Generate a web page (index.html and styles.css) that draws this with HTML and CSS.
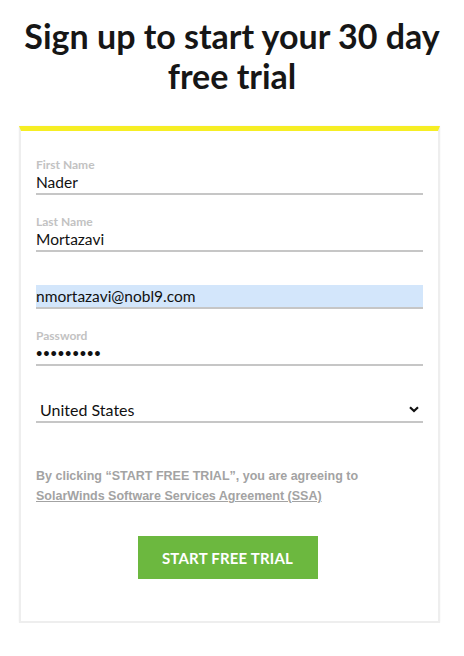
FILE: index.html
```html
<!DOCTYPE html>
<html>
<head>
<meta charset="utf-8">
<link rel="stylesheet" href="styles.css">
</head>
<body>
<h1 class="title">Sign up to start your 30 day free trial</h1>
<form class="card">
  <div class="field">
    <label class="label">First Name</label>
    <div class="input">Nader</div>
  </div>
  <div class="field">
    <label class="label">Last Name</label>
    <div class="input">Mortazavi</div>
  </div>
  <div class="field">
    <label class="label hidden">Email</label>
    <div class="input autofill">nmortazavi@nobl9.com</div>
  </div>
  <div class="field">
    <label class="label">Password</label>
    <div class="input dots">•••••••••</div>
  </div>
  <div class="select">
    <span>United States</span>
    <svg class="chev" width="10" height="7" viewBox="0 0 10 7"><path d="M1 1.2 L5 5 L9 1.2" fill="none" stroke="#111" stroke-width="2.2"/></svg>
  </div>
  <p class="terms">By clicking “START FREE TRIAL”, you are agreeing to<br><a class="link">SolarWinds Software Services Agreement (SSA)</a></p>
  <div class="actions"><button type="button" class="btn">START FREE TRIAL</button></div>
</form>
</body>
</html>
```
FILE: styles.css
```css
html, body { margin: 0; padding: 0; background: #fff; }
body { width: 464px; font-family: "Lato", "Noto Sans", sans-serif; color: #111; }
.title {
  margin: 0;
  padding: 16px 10px 0 10px;
  height: 110px;
  box-sizing: border-box;
  text-align: center;
  font-size: 34px;
  line-height: 40px;
  font-weight: 700;
  color: #161616;
}
.card {
  margin: 16px 24px 0 19px;
  border: 2px solid #eeeeee;
  border-top: 5px solid #f6ee24;
  padding: 28px 15px 42px 15px;
  box-shadow: 0 0 2px rgba(0,0,0,0.05);
}
.field { margin-bottom: 21px; }
.field:nth-child(4) { margin-bottom: 0; }
.label {
  display: block;
  font-size: 12px;
  line-height: 12px;
  font-weight: 700;
  color: #c2c2c2;
}
.label.hidden { visibility: hidden; }
.input {
  height: 22px;
  line-height: 22px;
  font-size: 15.5px;
  border-bottom: 2px solid #c6c6c6;
  color: #111;
}
.autofill { background: #d3e6fb; }
.dots { font-size: 11px; letter-spacing: 0.9px; font-weight: 700; }
.select {
  margin-top: 31px;
  height: 24px;
  border-bottom: 2px solid #c6c6c6;
  display: flex;
  align-items: center;
  justify-content: space-between;
  padding: 0 4px 0 4px;
  font-size: 16px;
}
.chev { display: block; margin-top: 1px; }
.terms {
  margin: 43px 0 0 0;
  font-family: "Liberation Sans", Arial, sans-serif;
  font-weight: 700;
  font-size: 12.5px;
  line-height: 20px;
  color: #a3a3a3;
}
.link { text-decoration: underline; color: #a3a3a3; }
.actions { display: flex; justify-content: center; margin-top: 30px; }
.btn {
  width: 180px;
  height: 43px;
  margin-left: -4px;
  border: 0;
  background: #6cb83f;
  color: #fff;
  font-family: "Lato", sans-serif;
  font-weight: 700;
  font-size: 15px;
  letter-spacing: 0.2px;
  padding: 0;
}
```
